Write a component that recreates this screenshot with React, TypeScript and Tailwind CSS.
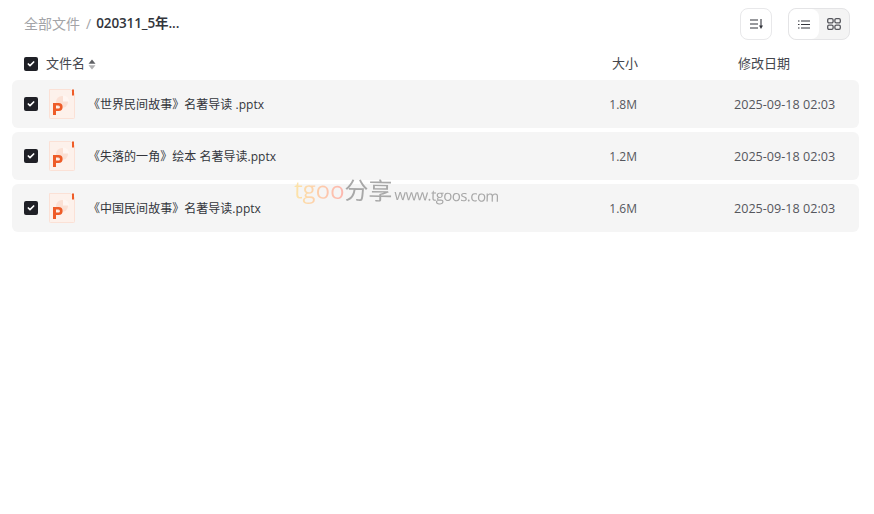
import { Check } from "lucide-react";

const files = [
  { name: "《世界民间故事》名著导读 .pptx", size: "1.8M", date: "2025-09-18 02:03" },
  { name: "《失落的一角》绘本 名著导读.pptx", size: "1.2M", date: "2025-09-18 02:03" },
  { name: "《中国民间故事》名著导读.pptx", size: "1.6M", date: "2025-09-18 02:03" },
];

const CheckBox = () => (
  <div className="w-[14px] h-[14px] rounded-[2px] bg-[#1f2026] flex items-center justify-center shrink-0">
    <Check size={8} strokeWidth={5} className="text-white" />
  </div>
);

const PptIcon = () => (
  <svg width="26" height="30" viewBox="0 0 26 30" className="shrink-0">
    <path d="M0.5 0.5h21l4 4v24a1 1 0 0 1-1 1H1.5a1 1 0 0 1-1-1z" fill="#fdf1eb" stroke="#fbe1d6" />
    <rect x="23" y="0.5" width="2" height="6" fill="#ee5c28" />
    <circle cx="13" cy="13" r="6" fill="#fbe0d4" />
    <path d="M14 6.5a6 6 0 0 1 6 6h-6z" fill="#fff6f2" />
    <path d="M4 26V14h5.6a4 4 0 0 1 0 8H7v4zM7 19.6h2.4a1.6 1.6 0 0 0 0-3.2H7z" fill="#ee5c28" />
  </svg>
);

const App = () => {
  return (
    <div className="relative w-[874px] h-[514px] bg-white overflow-hidden font-['Open_Sans','Noto_Sans_CJK_SC',sans-serif] text-[#33353c]">
      {/* Toolbar */}
      <div className="h-12 flex items-center justify-between pl-6 pr-6">
        <div className="flex items-center text-[14px] -mt-[2px]">
          <span className="text-[#a3a4a8]">全部文件</span>
          <span className="text-[#a3a4a8] ml-[6px] mr-[5px]">/</span>
          <span className="text-[13.5px] font-semibold tracking-[-0.1px] text-[#33353c]">020311_5年...</span>
        </div>
        <div className="flex items-center gap-4">
          <button className="w-8 h-8 rounded-lg border border-[#e8e8ea] bg-white flex items-center justify-center">
            <svg width="13" height="10" viewBox="0 0 13 10" fill="none" stroke="#33353c" strokeWidth="1.1">
              <path d="M0 1h8M0 5h8M0 9h8M11 0v7" />
              <path d="M9 6.5h4L11 10z" fill="#33353c" stroke="none" />
            </svg>
          </button>
          <div className="w-[62px] h-8 rounded-lg border border-[#e4e4e6] bg-[#f4f4f4] flex">
            <div className="w-[30px] h-full rounded-lg bg-white flex items-center justify-center">
              <svg width="12" height="9" viewBox="0 0 12 9" fill="none" stroke="#33353c" strokeWidth="1.1">
                <path d="M3 1h9M3 4.5h9M3 8h9M0 1h1.5M0 4.5h1.5M0 8h1.5" />
              </svg>
            </div>
            <div className="flex-1 flex items-center justify-center">
              <svg width="14" height="12" viewBox="0 0 14 12" fill="none" stroke="#55565c" strokeWidth="1.3">
                <rect x="0.7" y="0.7" width="5.4" height="4.2" rx="1.3" />
                <rect x="7.9" y="0.7" width="5.4" height="4.2" rx="1.3" />
                <rect x="0.7" y="7.1" width="5.4" height="4.2" rx="1.3" />
                <rect x="7.9" y="7.1" width="5.4" height="4.2" rx="1.3" />
              </svg>
            </div>
          </div>
        </div>
      </div>

      {/* Column header */}
      <div className="h-8 flex items-center pl-6 text-[13px] text-[#44464d]">
        <CheckBox />
        <span className="ml-2">文件名</span>
        <svg width="8" height="11" viewBox="0 0 8 11" className="ml-[3px]">
          <path d="M4 0.5L7.5 4.8H0.5z" fill="#5f6064" />
          <path d="M4 10.5L7.5 6.2H0.5z" fill="#b0b0b2" />
        </svg>
        <span className="ml-auto w-[38px] text-right mr-[100px]">大小</span>
        <span className="w-[136px]">修改日期</span>
      </div>

      {/* File rows */}
      <div className="flex flex-col gap-1 pl-3 pr-[15px]">
        {files.map((file) => (
          <div key={file.name} className="h-12 rounded-md bg-[#f5f5f5] flex items-center pl-3">
            <CheckBox />
            <div className="ml-[11px]">
              <PptIcon />
            </div>
            <span className="ml-[13px] mt-[2px] text-[12px] tracking-[0.03px]">{file.name}</span>
            <span className="ml-auto mt-[2px] text-[12px] text-[#55575d] w-[40px] text-right mr-[97px]">{file.size}</span>
            <span className="w-[125px] mt-[2px] text-[12.6px] text-[#55575d]">{file.date}</span>
          </div>
        ))}
      </div>

      {/* Watermark */}
      <div className="absolute left-[294px] top-[176px] flex items-baseline opacity-90 rotate-[1deg]">
        <span className="text-[24px] leading-[30px] bg-gradient-to-r from-[#fde3a0] to-[#fdb0a8] bg-clip-text text-transparent">tgoo</span>
        <span className="text-[24px] leading-[30px] text-[#a0a0a0]">分享</span>
        <span className="ml-[2px] text-[15px] leading-[30px] text-[#a0a0a0] tracking-[-0.55px]">www.tgoos.com</span>
      </div>
    </div>
  );
};

export default App;
